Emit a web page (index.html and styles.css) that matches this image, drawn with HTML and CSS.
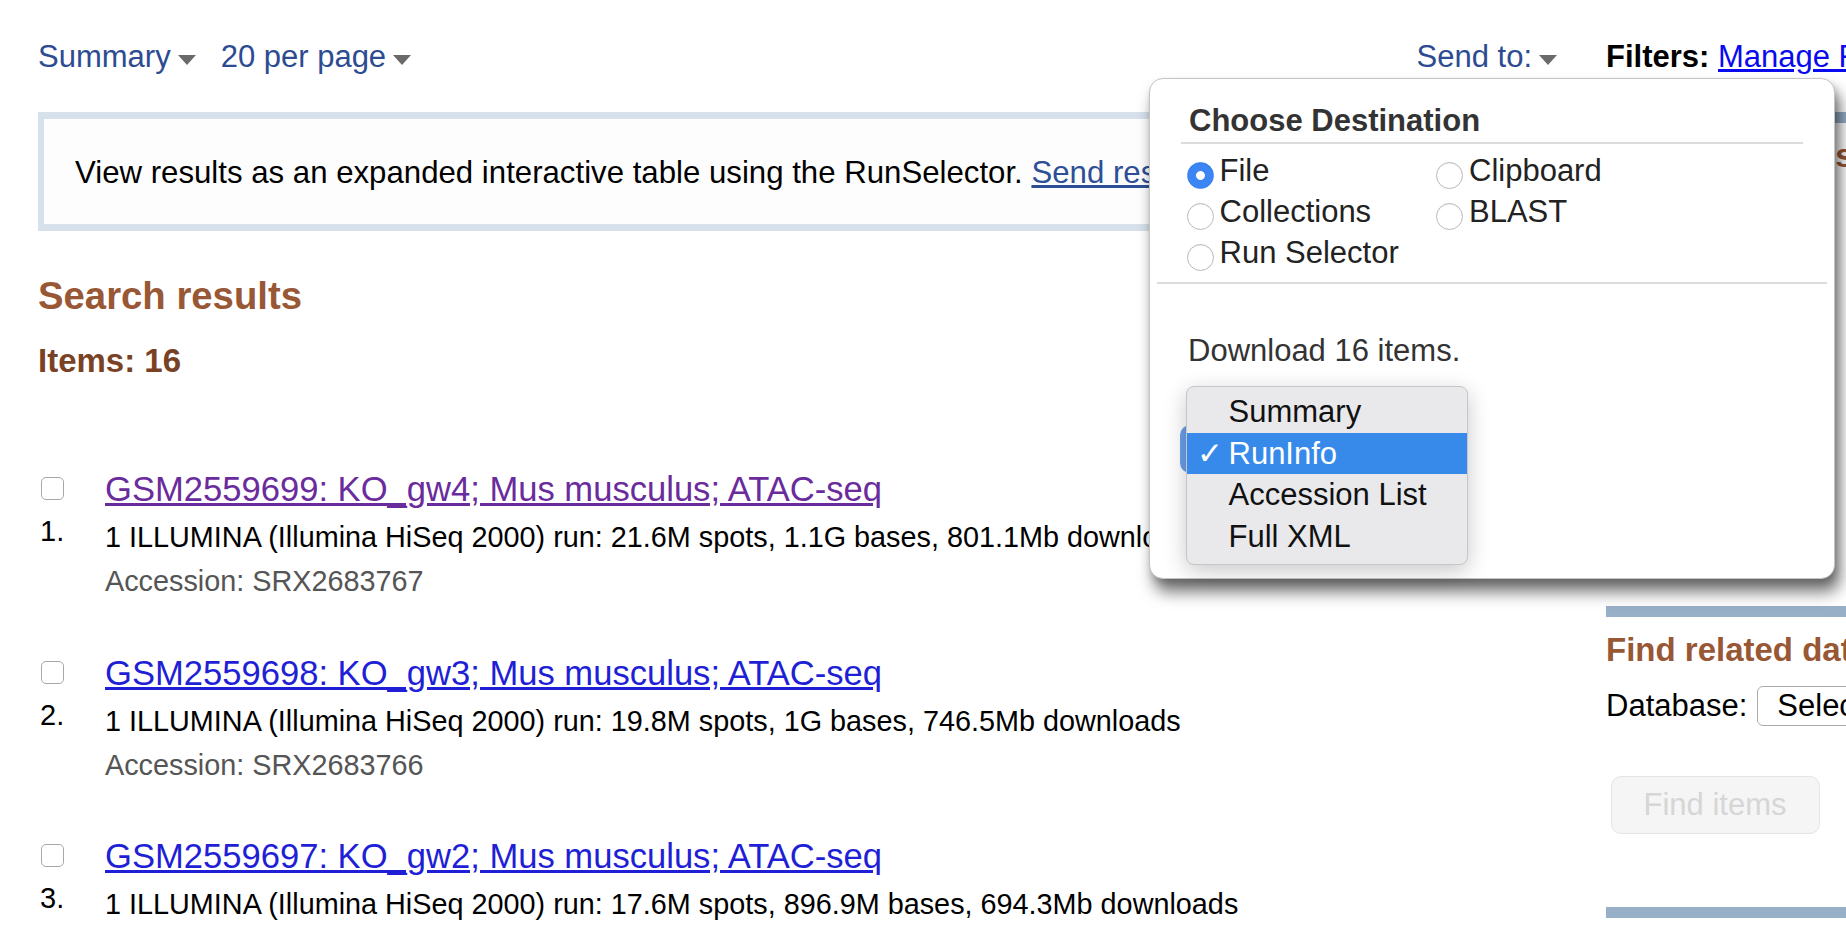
FILE: index.html
```html
<!DOCTYPE html>
<html lang="en">
<head>
<meta charset="utf-8">
<title>SRA search results</title>
<link rel="stylesheet" href="styles.css">
</head>
<body>
<div class="page">
  <div class="main">
    <div class="topbar">
      <div class="tb-left">
        <a class="dd">Summary<span class="caret"></span></a>
        <a class="dd">20 per page<span class="caret"></span></a>
      </div>
      <a class="dd">Send to:<span class="caret"></span></a>
    </div>

    <div class="infobox">View results as an expanded interactive table using the RunSelector. <a class="navlink">Send results to Run selector</a></div>

    <h2 class="res-title">Search results</h2>
    <h3 class="items-count">Items: 16</h3>

    <div class="results">
      <div class="rslt">
        <div class="rnum"><input type="checkbox" class="cb"><span class="num">1.</span></div>
        <div class="rbody">
          <a class="title visited">GSM2559699: KO_gw4; Mus musculus; ATAC-seq</a>
          <div class="desc">1 ILLUMINA (Illumina HiSeq 2000) run: 21.6M spots, 1.1G bases, 801.1Mb downloads</div>
          <div class="acc">Accession: SRX2683767</div>
        </div>
      </div>
      <div class="rslt">
        <div class="rnum"><input type="checkbox" class="cb"><span class="num">2.</span></div>
        <div class="rbody">
          <a class="title">GSM2559698: KO_gw3; Mus musculus; ATAC-seq</a>
          <div class="desc">1 ILLUMINA (Illumina HiSeq 2000) run: 19.8M spots, 1G bases, 746.5Mb downloads</div>
          <div class="acc">Accession: SRX2683766</div>
        </div>
      </div>
      <div class="rslt">
        <div class="rnum"><input type="checkbox" class="cb"><span class="num">3.</span></div>
        <div class="rbody">
          <a class="title">GSM2559697: KO_gw2; Mus musculus; ATAC-seq</a>
          <div class="desc">1 ILLUMINA (Illumina HiSeq 2000) run: 17.6M spots, 896.9M bases, 694.3Mb downloads</div>
          <div class="acc">Accession: SRX2683765</div>
        </div>
      </div>
    </div>
  </div>

  <div class="side">
    <div class="filters"><b>Filters:</b> <a class="mlink">Manage Filters</a></div>
    <div class="portlet portlet-first">
      <h3 class="p-title">Analyze these sequences</h3>
    </div>
    <div class="portlet">
      <h3 class="p-title">Find related data</h3>
      <div class="db-row">
        <span>Database:</span>
        <span class="db-select">Select</span>
      </div>
      <button class="find-btn" disabled>Find items</button>
    </div>
    <div class="portlet portlet-last"></div>
  </div>
</div>

<div class="popup">
  <div class="pop-head">Choose Destination</div>
  <div class="radios">
    <label class="opt"><input type="radio" name="dest" class="rd" checked>File</label>
    <label class="opt"><input type="radio" name="dest" class="rd">Clipboard</label>
    <label class="opt"><input type="radio" name="dest" class="rd">Collections</label>
    <label class="opt"><input type="radio" name="dest" class="rd">BLAST</label>
    <label class="opt"><input type="radio" name="dest" class="rd">Run Selector</label>
  </div>
  <div class="pop-sep"></div>
  <div class="download">Download 16 items.</div>
  <div class="fmt-select"></div>
  <ul class="fmt-menu">
    <li>Summary</li>
    <li class="sel"><span class="check">✓</span>RunInfo</li>
    <li>Accession List</li>
    <li>Full XML</li>
  </ul>
</div>
</body>
</html>
```

FILE: styles.css
```css
html, body {
  margin: 0;
  padding: 0;
  width: 1846px;
  height: 930px;
  overflow: hidden;
  background: #fff;
}

body {
  position: relative;
  font-family: "Liberation Sans", Arial, Helvetica, sans-serif;
  color: #000;
}

a { cursor: pointer; }

.page {
  display: flex;
  align-items: flex-start;
  padding: 39px 0 0 38px;
}

.main {
  flex: none;
  width: 1519px;
}

/* ---------- top bar ---------- */
.topbar {
  display: flex;
  justify-content: space-between;
  height: 36px;
  font-size: 31px;
  line-height: 36px;
}

.tb-left {
  display: flex;
  gap: 25px;
}

.dd {
  display: flex;
  color: #2d4b91;
  white-space: nowrap;
}

.caret {
  width: 0;
  height: 0;
  margin: 16px 0 0 7px;
  border-left: 9px solid transparent;
  border-right: 9px solid transparent;
  border-top: 10px solid #6a6a6a;
}

/* ---------- info box ---------- */
.infobox {
  margin-top: 37px;
  border: solid #d7e1eb;
  border-width: 7px 6px;
  background: #fdfdfd;
  padding: 36px 31px 33px;
  font-size: 31.2px;
  line-height: 36px;
  white-space: nowrap;
}

.navlink {
  color: #2d4f97;
  text-decoration: underline;
}

/* ---------- headings ---------- */
.res-title {
  margin: 43px 0 0;
  font-size: 38.3px;
  line-height: 44px;
  font-weight: bold;
  color: #985735;
}

.items-count {
  margin: 24px 0 0;
  font-size: 33px;
  line-height: 38px;
  font-weight: bold;
  color: #7a4225;
}

/* ---------- results ---------- */
.results {
  margin-top: 89px;
}

.rslt {
  display: grid;
  grid-template-columns: 67px 1fr;
  margin-bottom: 49.5px;
}

.rnum {
  display: flex;
  flex-direction: column;
  align-items: flex-start;
}

.cb {
  -webkit-appearance: none;
  appearance: none;
  display: block;
  width: 23px;
  height: 23px;
  margin: 8px 0 0 2.5px;
  border: 1px solid #a8a8a8;
  border-radius: 5px;
  background: #fff;
  box-sizing: border-box;
}

.num {
  margin-top: 13px;
  margin-left: 2px;
  font-size: 29px;
  line-height: 36px;
}

.rbody {
  white-space: nowrap;
}

.title {
  display: block;
  font-size: 34.6px;
  line-height: 40px;
  color: #1f1fd6;
  text-decoration: underline;
}

.title.visited {
  color: #6a2c9c;
}

.desc {
  margin-top: 6px;
  font-size: 28.8px;
  line-height: 44px;
}

.acc {
  font-size: 28.8px;
  line-height: 44px;
  color: #555;
}

/* ---------- side column ---------- */
.side {
  flex: none;
  width: 330px;
  margin-left: 49px;
}

.filters {
  height: 36px;
  font-size: 31px;
  line-height: 36px;
  white-space: nowrap;
}

.mlink {
  color: #0a0aee;
  text-decoration: underline;
}

.portlet {
  border-top: 11px solid #97afc7;
  box-sizing: border-box;
}

.portlet-first {
  margin-top: 37px;
  height: 494px;
}

.p-title {
  margin: 14px 0 0;
  font-size: 33px;
  line-height: 38px;
  font-weight: bold;
  color: #985735;
  white-space: nowrap;
}

.db-row {
  display: flex;
  align-items: center;
  margin-top: 17.5px;
  height: 39px;
  font-size: 31px;
  line-height: 36px;
  white-space: nowrap;
}

.db-select {
  margin-left: 10px;
  height: 40px;
  width: 200px;
  flex: none;
  box-sizing: border-box;
  border: 1px solid #ababab;
  border-radius: 6px;
  padding-left: 19px;
  line-height: 38px;
  background: #fff;
}

.find-btn {
  display: block;
  margin: 50.5px 0 0 4.5px;
  width: 209px;
  height: 58px;
  padding: 0 0 0 32px;
  text-align: left;
  font-family: inherit;
  font-size: 31px;
  color: #d6d6d6;
  background: #f5f5f5;
  border: 1px solid #e4e4e4;
  border-radius: 10px;
}

.portlet-last {
  margin-top: 73px;
  height: 40px;
}

/* ---------- Send to popup ---------- */
.popup {
  position: absolute;
  left: 1149px;
  top: 78px;
  width: 686px;
  height: 501px;
  box-sizing: border-box;
  padding: 0 7px;
  background: #fff;
  border: 1px solid #c4c4c4;
  border-radius: 14px;
  box-shadow: 5px 13px 16px rgba(0, 0, 0, 0.55), 2px 4px 6px rgba(0, 0, 0, 0.15);
  color: #333;
}

.pop-head {
  margin: 23.5px 24px 0;
  padding: 0 0 3.5px 8px;
  border-bottom: 2px solid #dcdcdc;
  font-size: 31px;
  line-height: 36px;
  font-weight: bold;
  color: #333;
}

.radios {
  display: grid;
  grid-template-columns: 249.5px auto;
  margin-top: 6px;
  padding-left: 29.5px;
}

.opt {
  display: flex;
  align-items: flex-start;
  height: 41px;
  font-size: 31px;
  line-height: 41px;
  color: #222;
  white-space: nowrap;
}

.rd {
  -webkit-appearance: none;
  appearance: none;
  flex: none;
  width: 27px;
  height: 27px;
  margin: 12px 6px 0 0;
  box-sizing: border-box;
  border: 1px solid #b9b9b9;
  border-radius: 50%;
  background: #fff;
  box-shadow: inset 0 1px 1px rgba(0, 0, 0, 0.06);
}

.rd:checked {
  border-color: #3b86f4;
  background: radial-gradient(circle, #fff 0 4px, #3b86f4 4.8px);
}

.pop-sep {
  margin-top: 8.5px;
  border-top: 2px solid #dcdcdc;
}

.download {
  margin-top: 49px;
  padding-left: 31px;
  font-size: 31px;
  line-height: 36px;
  color: #333;
}

.fmt-select {
  margin: 56px 0 0 23px;
  width: 262px;
  height: 48px;
  border-radius: 10px;
  background: #6a9fe8;
}

.fmt-menu {
  position: absolute;
  left: 36px;
  top: 306.5px;
  width: 282px;
  height: 179px;
  box-sizing: border-box;
  margin: 0;
  padding: 4.5px 0 0;
  list-style: none;
  background: #e9e9eb;
  border: 1px solid #c6c6c8;
  border-radius: 8px;
  box-shadow: 0 6px 22px rgba(0, 0, 0, 0.22);
  color: #111;
}

.fmt-menu li {
  position: relative;
  height: 41.5px;
  padding-left: 41.5px;
  font-size: 31px;
  line-height: 41.5px;
  white-space: nowrap;
}

.fmt-menu li.sel {
  background: #378aea;
  color: #fff;
}

.check {
  position: absolute;
  left: 10px;
  top: 0;
  font-family: "DejaVu Sans", sans-serif;
  font-size: 31px;
  font-weight: bold;
}
```
